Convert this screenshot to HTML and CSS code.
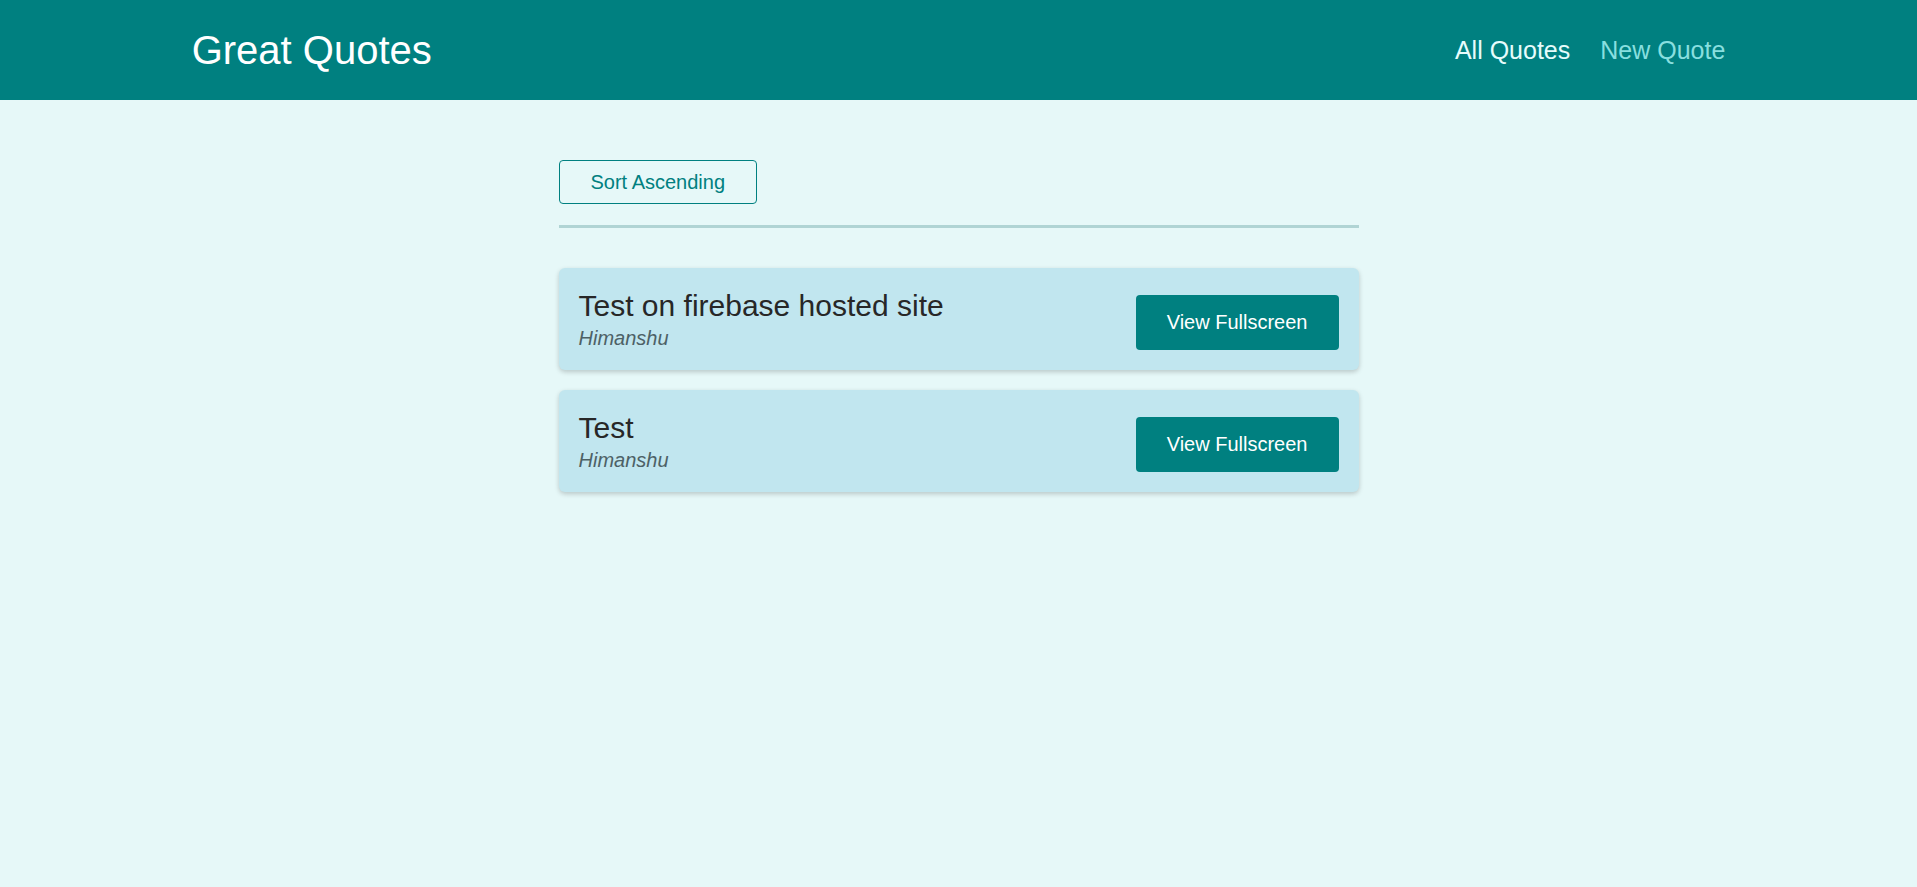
FILE: index.html
```html
<!DOCTYPE html>
<html lang="en">
<head>
<meta charset="utf-8">
<title>Great Quotes</title>
<link rel="stylesheet" href="styles.css">
</head>
<body>
<header class="header">
  <div class="logo">Great Quotes</div>
  <nav class="nav">
    <ul>
      <li><a href="#" class="active">All Quotes</a></li>
      <li><a href="#">New Quote</a></li>
    </ul>
  </nav>
</header>
<main class="main">
  <div class="sorting">
    <button class="btn-outline">Sort Ascending</button>
  </div>
  <ul class="list">
    <li class="item">
      <figure class="quote">
        <blockquote class="quote-text">Test on firebase hosted site</blockquote>
        <figcaption class="quote-author">Himanshu</figcaption>
      </figure>
      <a href="#" class="btn">View Fullscreen</a>
    </li>
    <li class="item">
      <figure class="quote">
        <blockquote class="quote-text">Test</blockquote>
        <figcaption class="quote-author">Himanshu</figcaption>
      </figure>
      <a href="#" class="btn">View Fullscreen</a>
    </li>
  </ul>
</main>
</body>
</html>
```
FILE: styles.css
```css
* { box-sizing: border-box; }
html, body {
  margin: 0;
  padding: 0;
}
body {
  font-family: "Liberation Sans", Arial, sans-serif;
  background-color: #e6f8f8;
  min-height: 100vh;
}
.header {
  width: 100%;
  height: 100px;
  display: flex;
  align-items: center;
  justify-content: space-between;
  background-color: #008080;
  padding: 0 10%;
}
.logo {
  font-size: 40px;
  color: #ffffff;
}
.nav ul {
  list-style: none;
  margin: 0;
  padding: 0;
  display: flex;
  align-items: baseline;
}
.nav li {
  margin-left: 30px;
  font-size: 25px;
}
.nav a {
  text-decoration: none;
  color: #88dfdf;
}
.nav a.active {
  color: #e6fcfc;
}
.main {
  width: 800px;
  margin: 60px auto 0;
}
.sorting {
  padding-bottom: 21px;
  border-bottom: 3px solid #b0d4d4;
  margin-bottom: 40px;
}
.btn-outline {
  font: inherit;
  font-size: 20px;
  line-height: 22px;
  color: #008080;
  background: transparent;
  border: 1px solid #008080;
  border-radius: 4px;
  padding: 10px 31px;
  cursor: pointer;
}
.list {
  list-style: none;
  margin: 0;
  padding: 0;
  display: flex;
  flex-direction: column;
  gap: 20px;
}
.item {
  display: flex;
  justify-content: space-between;
  align-items: center;
  background-color: #c1e6ef;
  border-radius: 6px;
  box-shadow: 0 2px 5px rgba(0, 0, 0, 0.2);
  padding: 21px 20px 20px;
}
.quote {
  margin: 0;
}
.quote-text {
  margin: 0;
  font-size: 30px;
  color: #272727;
}
.quote-author {
  margin-top: 4px;
  font-size: 20px;
  font-style: italic;
  color: #4d6166;
}
.btn {
  margin-top: 6px;
  display: inline-block;
  font-size: 20px;
  line-height: 23px;
  padding: 16px 31px;
  background-color: #008080;
  color: #ffffff;
  text-decoration: none;
  border-radius: 4px;
}
```
